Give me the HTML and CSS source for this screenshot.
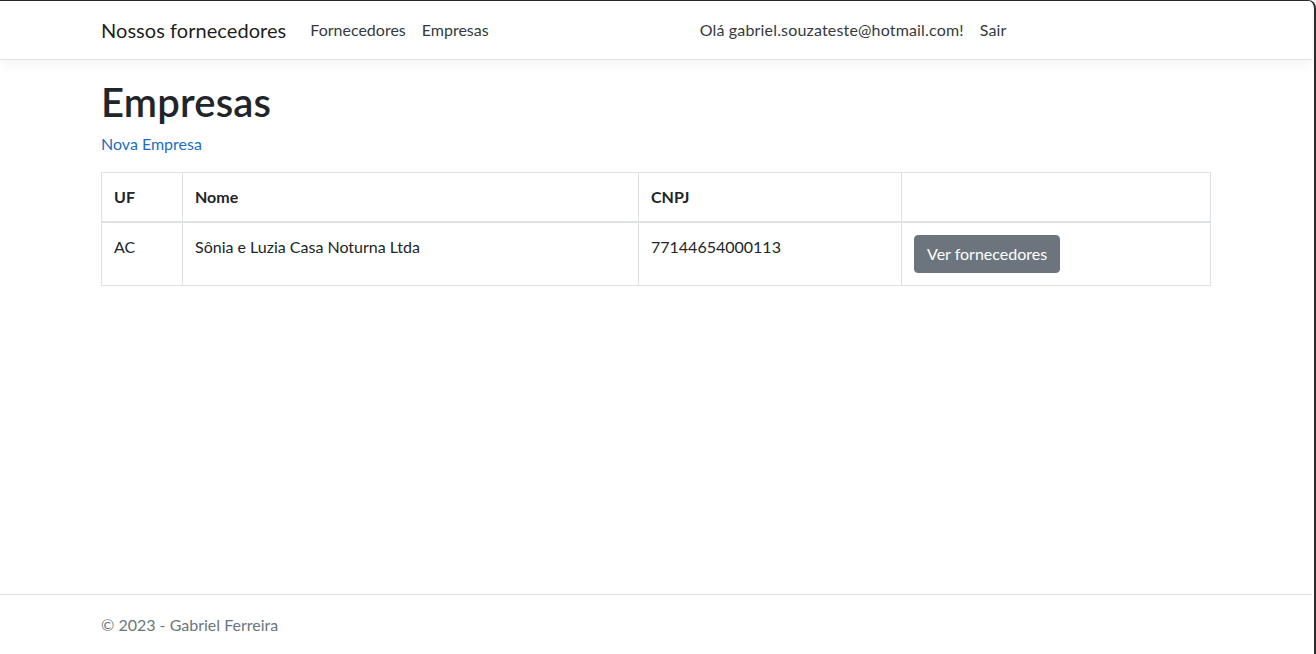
FILE: index.html
```html
<!DOCTYPE html>
<html lang="pt-br">
<head>
<meta charset="utf-8">
<title>Empresas</title>
<link rel="stylesheet" href="styles.css">
</head>
<body>
<div class="frame">
  <header class="navbar">
    <div class="container nav-inner">
      <a class="brand" href="#">Nossos fornecedores</a>
      <ul class="nav">
        <li><a class="nav-link" href="#">Fornecedores</a></li>
        <li><a class="nav-link" href="#">Empresas</a></li>
      </ul>
      <ul class="nav nav-login">
        <li><a class="nav-link" href="#">Olá gabriel.souzateste@hotmail.com!</a></li>
        <li><a class="nav-link" href="#">Sair</a></li>
      </ul>
    </div>
  </header>
  <main class="container main">
    <h1 class="title">Empresas</h1>
    <p class="actions"><a class="link" href="#">Nova Empresa</a></p>
    <table class="table">
      <thead>
        <tr>
          <th class="col-uf">UF</th>
          <th class="col-nome">Nome</th>
          <th class="col-cnpj">CNPJ</th>
          <th class="col-acao"></th>
        </tr>
      </thead>
      <tbody>
        <tr>
          <td>AC</td>
          <td>Sônia e Luzia Casa Noturna Ltda</td>
          <td>77144654000113</td>
          <td><a class="btn" href="#">Ver fornecedores</a></td>
        </tr>
      </tbody>
    </table>
  </main>
  <footer class="footer">
    <div class="container">© 2023 - Gabriel Ferreira</div>
  </footer>
</div>
</body>
</html>
```

FILE: styles.css
```css
* { box-sizing: border-box; }
html, body { margin: 0; padding: 0; height: 100%; }
body {
  font-family: "Segoe UI", Lato, "Noto Sans", sans-serif;
  font-size: 16px;
  line-height: 1.5;
  color: #212529;
  background: #fff;
}
a { text-decoration: none; }
.frame {
  height: 654px;
  border-top: 1px solid #2b2b2b;
  border-right: 2px solid #2b2b2b;
  border-top-right-radius: 8px;
  padding-right: 2px;
  display: flex;
  flex-direction: column;
  overflow: hidden;
}
.container {
  width: 1110px;
  margin: 0 auto;
}
.navbar {
  background: #fff;
  border-bottom: 1px solid #dee2e6;
  box-shadow: 0 4px 12px rgba(0,0,0,.05);
  padding: 8px 0;
  height: 59px;
  flex: none;
}
.nav-inner {
  display: flex;
  align-items: center;
  height: 42px;
}
.brand {
  font-size: 20px;
  line-height: 30px;
  color: rgba(0,0,0,.9);
  margin-right: 16px;
  white-space: nowrap;
  letter-spacing: 0.05px;
}
.nav {
  list-style: none;
  margin: 0;
  padding: 0;
  display: flex;
}
.nav-link {
  display: block;
  padding: 8px;
  color: #343a40;
  white-space: nowrap;
}
.nav-login { margin-left: 195px; }
.nav-login .nav-link { letter-spacing: 0.17px; }
.main {
  flex: 1;
  padding-top: 18px;
}
.title {
  font-size: 40px;
  font-weight: 600;
  line-height: 1.2;
  margin: 0 0 6px;
  letter-spacing: 0.2px;
}
.actions { margin: 0 0 16px; }
.link { color: #1b6ec2; }
.table {
  width: 100%;
  border-collapse: collapse;
}
.table th, .table td {
  border: 1px solid #dee2e6;
  padding: 12px;
  text-align: left;
  vertical-align: top;
}
.table th { font-weight: 700; border-bottom-width: 2px; }
.col-uf { width: 81px; }
.col-nome { width: 456px; }
.col-cnpj { width: 263px; }
.btn {
  display: inline-block;
  background: #6c757d;
  border: 1px solid #6c757d;
  color: #fff;
  border-radius: 4px;
  padding: 6px 12px;
  line-height: 24px;
}
.footer {
  border-top: 1px solid #dee2e6;
  color: #6c757d;
  line-height: 59px;
  height: 60px;
  flex: none;
  white-space: nowrap;
}
```
